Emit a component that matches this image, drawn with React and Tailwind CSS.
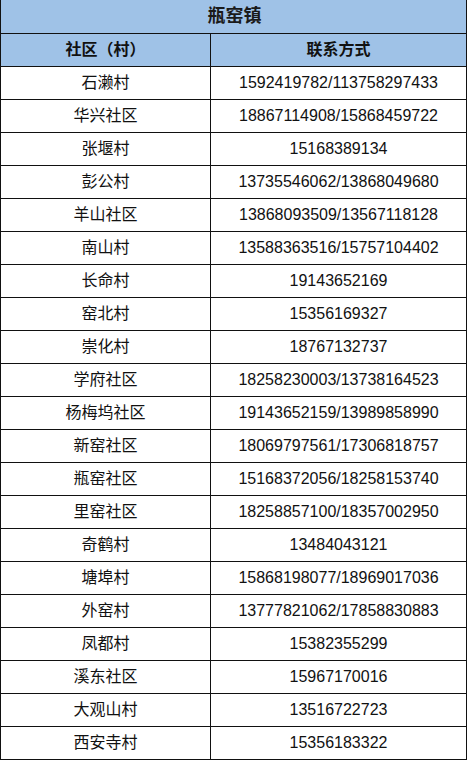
import React from 'react';

const rows = [
  ['石濑村', '1592419782/113758297433'],
  ['华兴社区', '18867114908/15868459722'],
  ['张堰村', '15168389134'],
  ['彭公村', '13735546062/13868049680'],
  ['羊山社区', '13868093509/13567118128'],
  ['南山村', '13588363516/15757104402'],
  ['长命村', '19143652169'],
  ['窑北村', '15356169327'],
  ['崇化村', '18767132737'],
  ['学府社区', '18258230003/13738164523'],
  ['杨梅坞社区', '19143652159/13989858990'],
  ['新窑社区', '18069797561/17306818757'],
  ['瓶窑社区', '15168372056/18258153740'],
  ['里窑社区', '18258857100/18357002950'],
  ['奇鹤村', '13484043121'],
  ['塘埠村', '15868198077/18969017036'],
  ['外窑村', '13777821062/17858830883'],
  ['凤都村', '15382355299'],
  ['溪东社区', '15967170016'],
  ['大观山村', '13516722723'],
  ['西安寺村', '15356183322'],
];

const font = { fontFamily: '"Liberation Sans", "Noto Sans CJK SC", sans-serif' };

export default function App() {
  return (
    <div className="w-[468px] h-[760px] bg-white overflow-hidden" style={font}>
      <div className="w-[467px] border-l border-r border-[#111]">
        {/* 标题 */}
        <div className="h-[34px] border-b border-[#111] bg-[#9fc2e7] flex items-center justify-center pl-[2px] text-[18px] font-bold text-[#1a1a1a]">
          瓶窑镇
        </div>
        {/* 表头 */}
        <div className="h-[33px] border-b border-[#111] bg-[#9fc2e7] flex text-[16px] font-bold text-[#111]">
          <div className="w-[210px] border-r border-[#111] flex items-center justify-center">社区（村）</div>
          <div className="flex-1 flex items-center justify-center">联系方式</div>
        </div>
        {rows.map(([name, phone]) => (
          <div key={name} className="h-[33px] border-b border-[#111] flex text-[16px] text-[#111]">
            <div className="w-[210px] border-r border-[#111] flex items-center justify-center">{name}</div>
            <div className="flex-1 flex items-center justify-center">{phone}</div>
          </div>
        ))}
      </div>
    </div>
  );
}
